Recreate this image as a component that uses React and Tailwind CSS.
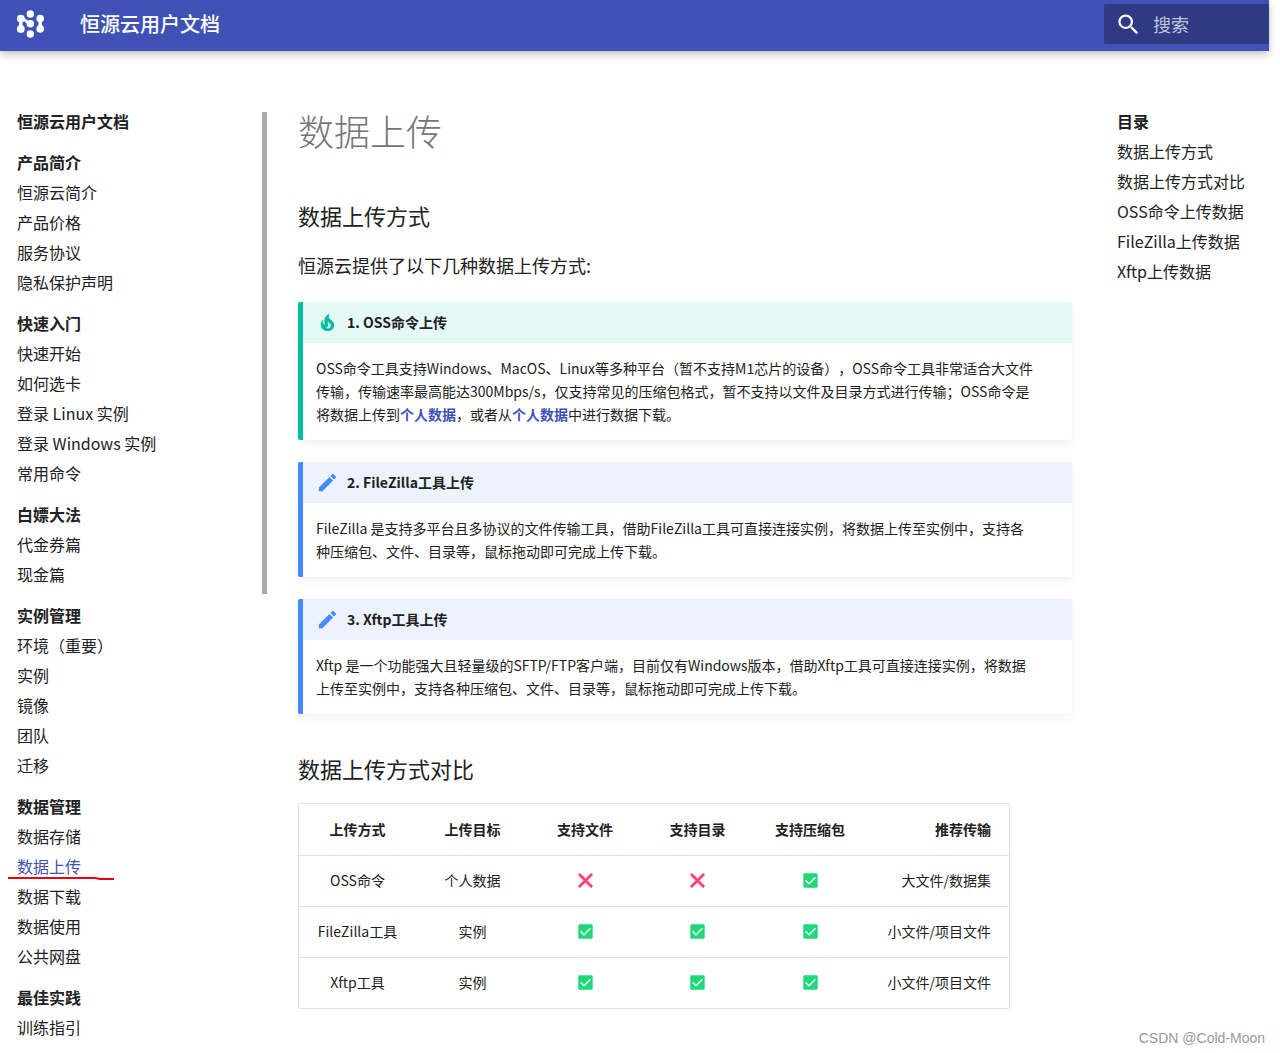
import React from "react";

const sections = [
  { title: "产品简介", items: ["恒源云简介", "产品价格", "服务协议", "隐私保护声明"] },
  { title: "快速入门", items: ["快速开始", "如何选卡", "登录 Linux 实例", "登录 Windows 实例", "常用命令"] },
  { title: "白嫖大法", items: ["代金券篇", "现金篇"] },
  { title: "实例管理", items: ["环境（重要）", "实例", "镜像", "团队", "迁移"] },
  { title: "数据管理", items: ["数据存储", "数据上传", "数据下载", "数据使用", "公共网盘"] },
  { title: "最佳实践", items: ["训练指引"] },
];

const toc = ["数据上传方式", "数据上传方式对比", "OSS命令上传数据", "FileZilla上传数据", "Xftp上传数据"];

const headers = ["上传方式", "上传目标", "支持文件", "支持目录", "支持压缩包", "推荐传输"];

const rows = [
  ["OSS命令", "个人数据", false, false, true, "大文件/数据集"],
  ["FileZilla工具", "实例", true, true, true, "小文件/项目文件"],
  ["Xftp工具", "实例", true, true, true, "小文件/项目文件"],
];

function Logo() {
  return (
    <svg className="size-7" viewBox="0 0 28 28" fill="#fff" stroke="#fff" aria-hidden="true">
      <g stroke="none">
        <circle cx="14.3" cy="4" r="3.7" />
        <circle cx="14.3" cy="24" r="3.7" />
        <circle cx="4.8" cy="8.6" r="3.9" />
        <circle cx="4.8" cy="18.9" r="3.9" />
        <circle cx="24.2" cy="8.6" r="3.8" />
        <circle cx="24.2" cy="18.9" r="3.8" />
        <circle cx="14.3" cy="13.8" r="3.8" />
      </g>
      <path d="M4.8 9v10M24.2 9v10" strokeWidth="3.4" fill="none" />
      <path d="M5.5 8.6c4 0 4 3.6 8 4.6" strokeWidth="3" fill="none" />
    </svg>
  );
}

function SearchIcon() {
  return (
    <svg className="size-[27px] shrink-0" viewBox="0 0 24 24" fill="currentColor" aria-hidden="true">
      <path d="M9.5 3A6.5 6.5 0 0 1 16 9.5c0 1.61-.59 3.09-1.56 4.23l.27.27h.79l5 5-1.5 1.5-5-5v-.79l-.27-.27A6.516 6.516 0 0 1 9.5 16 6.5 6.5 0 0 1 3 9.5 6.5 6.5 0 0 1 9.5 3m0 2C7 5 5 7 5 9.5S7 14 9.5 14 14 12 14 9.5 12 5 9.5 5Z" />
    </svg>
  );
}

function FireIcon() {
  return (
    <svg className="size-[23px] text-[#00bfa5]" viewBox="0 0 24 24" fill="currentColor" aria-hidden="true">
      <path d="M17.66 11.2c-.23-.3-.51-.56-.77-.82-.67-.6-1.43-1.03-2.07-1.66C13.33 7.26 13 4.85 13.95 3c-.95.23-1.78.75-2.49 1.32-2.59 2.08-3.61 5.75-2.39 8.9.04.1.08.2.08.33 0 .22-.15.42-.35.5-.23.1-.47.04-.66-.12a.58.58 0 0 1-.14-.17c-1.13-1.43-1.31-3.48-.55-5.12C5.78 10 4.87 12.3 5 14.47c.06.5.12 1 .29 1.5.14.6.41 1.2.71 1.73 1.08 1.73 2.95 2.97 4.96 3.22 2.14.27 4.43-.12 6.07-1.6 1.83-1.66 2.47-4.32 1.53-6.6l-.13-.26c-.21-.46-.77-1.26-.77-1.26m-3.16 6.3c-.28.24-.74.5-1.1.6-1.12.4-2.24-.16-2.9-.82 1.19-.28 1.9-1.16 2.11-2.05.17-.8-.15-1.46-.28-2.23-.12-.74-.1-1.37.17-2.06.19.38.39.76.63 1.06.77 1 1.98 1.44 2.24 2.8.04.14.06.28.06.43.03.82-.33 1.72-.93 2.27Z" />
    </svg>
  );
}

function PencilIcon() {
  return (
    <svg className="size-[23px] text-[#448aff]" viewBox="0 0 24 24" fill="currentColor" aria-hidden="true">
      <path d="M20.71 7.04c.39-.39.39-1.04 0-1.41l-2.34-2.34c-.37-.39-1.02-.39-1.41 0l-1.84 1.83 3.75 3.75M3 17.25V21h3.75L17.81 9.93l-3.75-3.75L3 17.25Z" />
    </svg>
  );
}

function Mark({ ok }) {
  return ok ? (
    <svg className="mx-auto size-[15px]" viewBox="0 0 15 15" role="img" aria-label="支持">
      <rect x="0.3" y="0.3" width="14.4" height="14.4" rx="1.4" fill="#1fd87a" />
      <path d="M3 7.8l3 2.9 6-6" stroke="#fff" strokeWidth="1.5" fill="none" strokeLinecap="round" strokeLinejoin="round" />
    </svg>
  ) : (
    <svg className="mx-auto size-[15px]" viewBox="0 0 15 15" role="img" aria-label="不支持">
      <path d="M1.8 1.8l11.4 11.4M13.2 1.8L1.8 13.2" stroke="#ff476e" strokeWidth="3" strokeLinecap="round" />
    </svg>
  );
}

function Admonition({ tip, title, children }) {
  return (
    <section
      className={
        "mt-[22px] rounded-xs border-l-[5px] shadow-[0_4px_10px_#0000000d,0_0_1px_#0000001a] " +
        (tip ? "border-[#00bfa5]" : "border-[#448aff]")
      }
    >
      <h3
        className={
          "flex h-[41px] items-center gap-2 pl-[13px] text-[14px] font-bold " +
          (tip ? "bg-[#e5f8f6]" : "bg-[#ecf3ff]")
        }
      >
        {tip ? <FireIcon /> : <PencilIcon />}
        {title}
      </h3>
      <p className="px-[13px] py-[14px] text-[14px] leading-[23px]">{children}</p>
    </section>
  );
}

function DataLink() {
  return (
    <a href="#personal-data" className="font-bold text-[#4051b5]">
      个人数据
    </a>
  );
}

export default function App() {
  return (
    <div className="relative h-screen overflow-hidden bg-white pr-[11px] font-['Noto_Sans_CJK_SC','Noto_Sans',sans-serif] text-[16px] text-[#212121] [text-spacing-trim:space-all]">
      <header className="flex h-[51px] items-center bg-[#4051b5] pb-[3px] pl-4 text-white shadow-[0_0_4px_#0000001a,0_4px_8px_#00000033]">
        <a href="#home" aria-label="恒源云">
          <Logo />
        </a>
        <span className="ml-9 flex-1 text-[20px] font-medium">恒源云用户文档</span>
        <label className="flex h-10 w-[165px] items-center gap-[11px] rounded-xs bg-[#2e3b84] pl-[11px]">
          <SearchIcon />
          <input
            type="search"
            aria-label="搜索"
            placeholder="搜索"
            className="w-full min-w-0 bg-transparent text-[18px] outline-none placeholder:text-[#c0c4da]"
          />
        </label>
      </header>

      <div className="flex items-start pt-[55px]">
        <nav aria-label="导航" className="w-[262px] shrink-0 pl-[17px] leading-[30px]">
          <a href="#home" className="block font-bold">
            恒源云用户文档
          </a>
          {sections.map((s) => (
            <div key={s.title} className="pt-[11px]">
              <h2 className="font-bold">{s.title}</h2>
              <ul>
                {s.items.map((item) => (
                  <li key={item} className="relative">
                    <a href={"#" + item} className={item === "数据上传" ? "text-[#4051b5]" : ""}>
                      {item}
                    </a>
                    {item === "数据上传" && (
                      <svg
                        className="absolute -left-[9px] top-[26px] h-[5px] w-[106px]"
                        viewBox="0 0 106 5"
                        fill="none"
                        aria-hidden="true"
                      >
                        <path d="M0 1h87l5 1h14" stroke="#e60012" strokeWidth="2" />
                      </svg>
                    )}
                  </li>
                ))}
              </ul>
            </div>
          ))}
        </nav>
        <div className="mt-[6px] h-[482px] w-[5px] shrink-0 bg-[#ababab]" />

        <main className="ml-[31px] min-w-0 flex-1">
          <h1 className="text-[36px] leading-[48px] font-light text-[#757575]">数据上传</h1>
          <h2 className="mt-[45px] text-[22px] leading-8">数据上传方式</h2>
          <p className="mt-[19px] text-[18px] leading-[30px]">恒源云提供了以下几种数据上传方式:</p>

          <Admonition tip title="1. OSS命令上传">
            OSS命令工具支持Windows、MacOS、Linux等多种平台（暂不支持M1芯片的设备），OSS命令工具非常适合大文件
            <br />
            传输，传输速率最高能达300Mbps/s，仅支持常见的压缩包格式，暂不支持以文件及目录方式进行传输；OSS命令是
            <br />
            将数据上传到
            <DataLink />
            ，或者从
            <DataLink />
            中进行数据下载。
          </Admonition>
          <Admonition title="2. FileZilla工具上传">
            FileZilla 是支持多平台且多协议的文件传输工具，借助FileZilla工具可直接连接实例，将数据上传至实例中，支持各
            <br />
            种压缩包、文件、目录等，鼠标拖动即可完成上传下载。
          </Admonition>
          <Admonition title="3. Xftp工具上传">
            Xftp 是一个功能强大且轻量级的SFTP/FTP客户端，目前仅有Windows版本，借助Xftp工具可直接连接实例，将数据
            <br />
            上传至实例中，支持各种压缩包、文件、目录等，鼠标拖动即可完成上传下载。
          </Admonition>

          <h2 className="mt-[38px] text-[22px] leading-8">数据上传方式对比</h2>
          <div className="mt-[19px] w-fit rounded-xs border border-[#e0e0e0]">
            <table className="table-fixed text-center text-[14px]">
              <colgroup>
                <col className="w-[117px]" />
                <col className="w-[113px]" />
                <col className="w-[112px]" />
                <col className="w-[113px]" />
                <col className="w-[112px]" />
                <col className="w-[143px]" />
              </colgroup>
              <thead>
                <tr className="h-[51px]">
                  {headers.map((h) => (
                    <th key={h} className="font-bold last:pr-[18px] last:text-right">
                      {h}
                    </th>
                  ))}
                </tr>
              </thead>
              <tbody>
                {rows.map((r) => (
                  <tr key={r[0]} className="h-[51px] border-t border-[#e0e0e0]">
                    {r.map((c, i) => (
                      <td key={i} className="last:pr-[18px] last:text-right">
                        {typeof c === "boolean" ? <Mark ok={c} /> : c}
                      </td>
                    ))}
                  </tr>
                ))}
              </tbody>
            </table>
          </div>
        </main>

        <nav aria-label="目录" className="ml-[45px] w-[152px] shrink-0 leading-[30px]">
          <h2 className="font-bold">目录</h2>
          <ul>
            {toc.map((t) => (
              <li key={t}>
                <a href={"#" + t}>{t}</a>
              </li>
            ))}
          </ul>
        </nav>
      </div>

      <div className="absolute right-[15px] bottom-[5px] font-['Liberation_Sans',Arial,sans-serif] text-[14px] leading-5 text-[#999]">
        CSDN @Cold-Moon
      </div>
    </div>
  );
}
